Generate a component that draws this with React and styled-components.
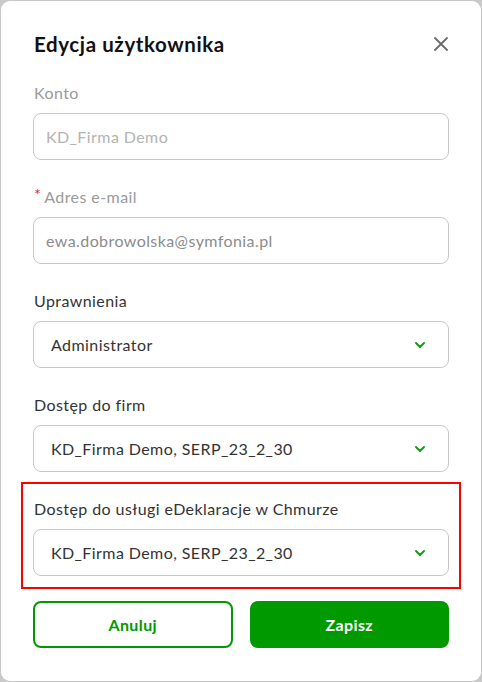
import React from "react";
import styled, { createGlobalStyle } from "styled-components";

const GlobalStyle = createGlobalStyle`
  html, body {
    margin: 0;
    padding: 0;
    background: #c9c9c9;
  }
  body {
    font-family: Lato, "Open Sans", sans-serif;
    letter-spacing: 0.42px;
  }
`;

const Backdrop = styled.div`
  padding: 1px;
  width: 482px;
  height: 682px;
  box-sizing: border-box;
`;

const Modal = styled.div`
  width: 480px;
  height: 680px;
  box-sizing: border-box;
  background: #fff;
  border-radius: 9px;
  padding: 31px 32px 32px;
  display: flex;
  flex-direction: column;
`;

const Header = styled.div`
  display: flex;
  align-items: center;
  justify-content: space-between;
  height: 24px;
  margin-bottom: 27px;
`;

const Title = styled.h2`
  margin: 0 0 0 1px;
  font-size: 20.5px;
  font-weight: 700;
  letter-spacing: 0.6px;
  color: #111;
  line-height: 24px;
`;

const CloseButton = styled.button`
  border: none;
  background: none;
  padding: 0;
  width: 24px;
  height: 24px;
  display: flex;
  align-items: center;
  justify-content: center;
  margin-right: -4px;
  cursor: pointer;
`;

const Field = styled.div`
  position: relative;
  display: flex;
  flex-direction: column;
  gap: 10px;
  margin-bottom: 27px;

  ${p =>
    p.highlight &&
    `
    &::after {
      content: "";
      position: absolute;
      top: -17px;
      left: -12px;
      right: -12px;
      bottom: -13px;
      border: 2px solid #ff0000;
      pointer-events: none;
    }
  `}
`;

const Label = styled.label`
  font-size: 16px;
  line-height: 20px;
  color: ${p => (p.muted ? "#9a9a9a" : "#333")};
  display: flex;
  align-items: flex-start;
  padding-left: 1px;
`;

const Required = styled.span`
  color: #e0243a;
  font-size: 16px;
  line-height: 14px;
  margin-right: 3px;
`;

const Box = styled.div`
  height: 47px;
  box-sizing: border-box;
  border: 1px solid #c8c8c8;
  border-radius: 8px;
  display: flex;
  align-items: center;
  justify-content: space-between;
  padding: 0 22px 0 ${p => (p.select ? "17px" : "12px")};
  font-size: 16px;
  color: ${p => p.color || "#333"};
`;

const Actions = styled.div`
  display: flex;
  gap: 17px;
  margin-top: -2px;
`;

const Button = styled.button`
  flex: 1;
  height: 47px;
  border-radius: 8px;
  font-family: inherit;
  font-size: 16px;
  font-weight: 700;
  letter-spacing: 0.4px;
  border: 2px solid #009900;
  background: ${p => (p.primary ? "#009900" : "#fff")};
  color: ${p => (p.primary ? "#fff" : "#009900")};
  cursor: pointer;
`;

const Chevron = () => (
  <svg width="12" height="8" viewBox="0 0 12 8">
    <path d="M2 2 6 6l4-4" fill="none" stroke="#169a16" strokeWidth="2" strokeLinecap="round" strokeLinejoin="round" />
  </svg>
);

const CloseIcon = () => (
  <svg width="14" height="14" viewBox="0 0 14 14">
    <path d="M1 1l12 12M13 1 1 13" stroke="#6b6b6b" strokeWidth="1.8" strokeLinecap="round" />
  </svg>
);

const App = () => (
  <>
    <GlobalStyle />
    <Backdrop>
      <Modal>
        <Header>
          <Title>Edycja użytkownika</Title>
          <CloseButton aria-label="Zamknij">
            <CloseIcon />
          </CloseButton>
        </Header>

        <Field>
          <Label muted>Konto</Label>
          <Box color="#b3b3b3">KD_Firma Demo</Box>
        </Field>

        <Field>
          <Label muted>
            <Required>*</Required>Adres e-mail
          </Label>
          <Box color="#8c8c8c">ewa.dobrowolska@symfonia.pl</Box>
        </Field>

        <Field>
          <Label>Uprawnienia</Label>
          <Box select>
            Administrator
            <Chevron />
          </Box>
        </Field>

        <Field>
          <Label>Dostęp do firm</Label>
          <Box select>
            KD_Firma Demo, SERP_23_2_30
            <Chevron />
          </Box>
        </Field>

        <Field highlight>
          <Label>Dostęp do usługi eDeklaracje w Chmurze</Label>
          <Box select>
            KD_Firma Demo, SERP_23_2_30
            <Chevron />
          </Box>
        </Field>

        <Actions>
          <Button>Anuluj</Button>
          <Button primary>Zapisz</Button>
        </Actions>
      </Modal>
    </Backdrop>
  </>
);

export default App;
